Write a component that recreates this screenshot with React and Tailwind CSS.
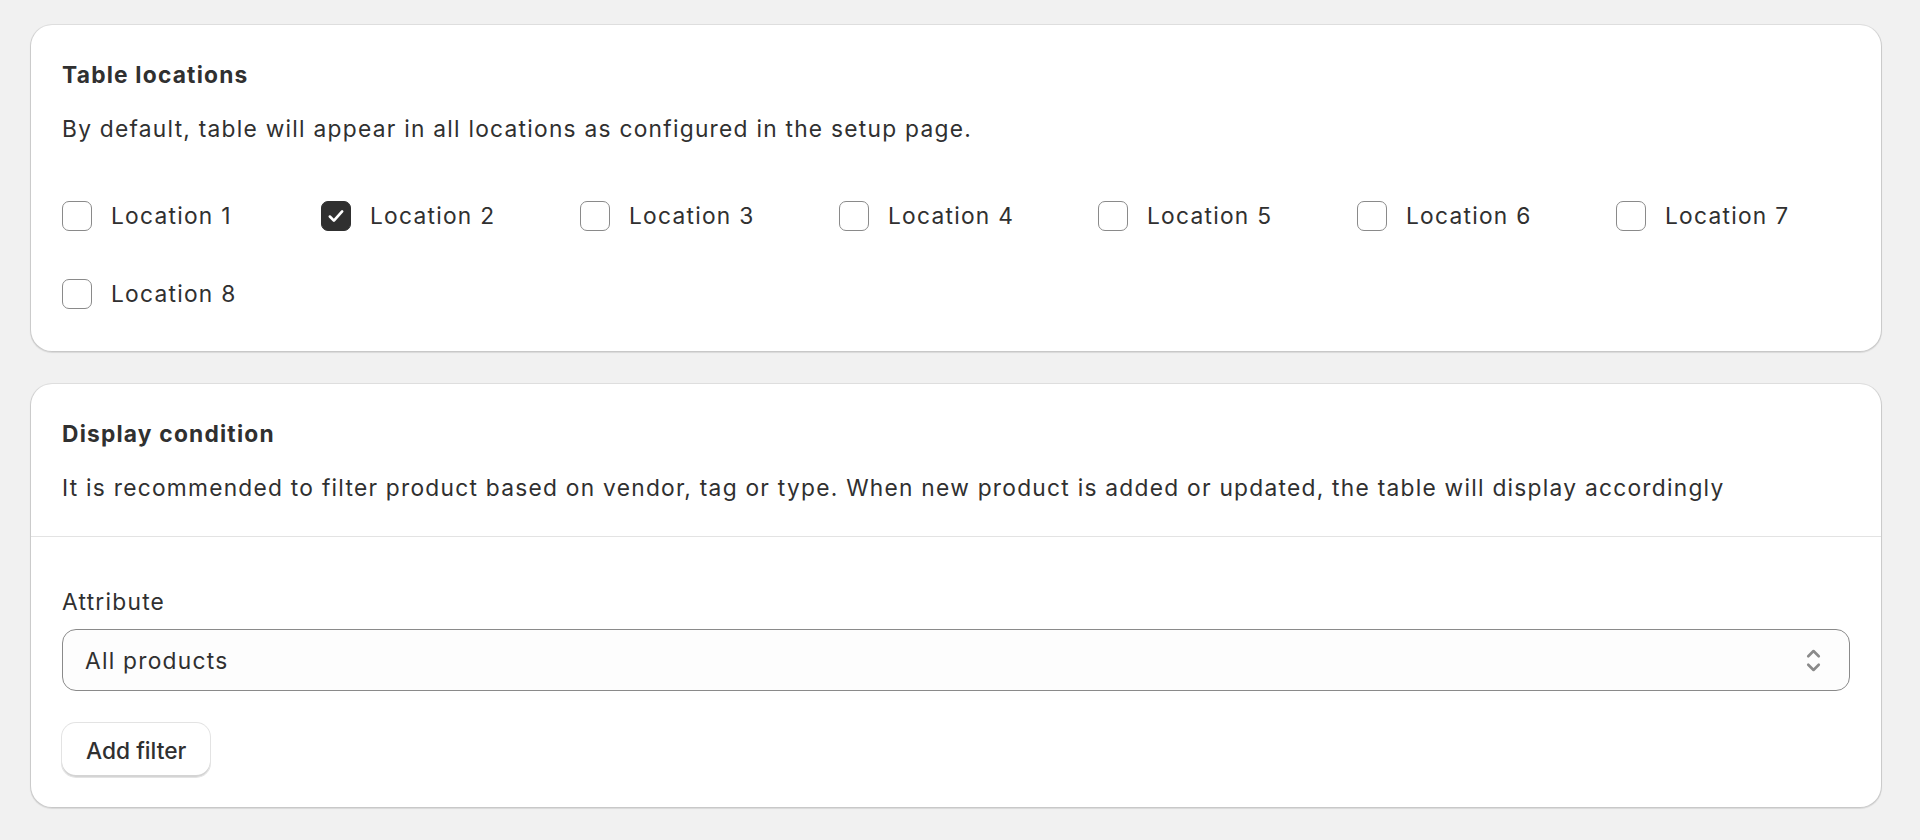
import React, { useState } from 'react';

const LOCATIONS = ['Location 1', 'Location 2', 'Location 3', 'Location 4', 'Location 5', 'Location 6', 'Location 7', 'Location 8'];

function Checkbox({ label, checked, onChange }) {
  return (
    <label className="flex items-center h-[35px] cursor-pointer select-none">
      <span
        className={
          checked
            ? 'flex items-center justify-center w-[30px] h-[30px] rounded-[7px] bg-[#303030] border border-[#303030]'
            : 'flex items-center justify-center w-[30px] h-[30px] rounded-[7px] bg-white border border-[#8a8a8a]'
        }
      >
        {checked && (
          <svg width="30" height="30" viewBox="0 0 20 20" fill="none">
            <path d="M5.6 10.4l2.9 2.9 5.9-6.6" stroke="#fff" strokeWidth="1.9" strokeLinecap="round" strokeLinejoin="round" />
          </svg>
        )}
      </span>
      <input type="checkbox" className="hidden" checked={checked} onChange={onChange} />
      <span className="ml-[19px]">{label}</span>
    </label>
  );
}

function SelectIcon() {
  return (
    <svg width="35" height="35" viewBox="0 0 20 20" fill="none">
      <path d="M7 7.6l3-3 3 3" stroke="#8a8a8a" strokeWidth="1.5" strokeLinecap="round" strokeLinejoin="round" />
      <path d="M7 12.4l3 3 3-3" stroke="#8a8a8a" strokeWidth="1.5" strokeLinecap="round" strokeLinejoin="round" />
    </svg>
  );
}

export default function App() {
  const [selected, setSelected] = useState(['Location 2']);
  const [attribute, setAttribute] = useState('All products');

  const toggle = (name) =>
    setSelected((prev) => (prev.includes(name) ? prev.filter((n) => n !== name) : [...prev, name]));

  return (
    <div className="min-h-screen bg-[#f1f1f1] pt-[25px] pl-[31px] pr-[39px] pb-[32px] text-[#303030] text-[22.75px] leading-[35px] tracking-[1.25px] font-['Inter',sans-serif] antialiased">
      <div className="flex flex-col gap-[33px]">
        {/* Table locations */}
        <section className="bg-white rounded-[21px] shadow-[0_0_0_1px_rgba(0,0,0,0.07),0_1px_1px_1px_rgba(0,0,0,0.1)] pt-[32px] px-[31px] pb-[40px]">
          <h2 className="font-[650] tracking-[1.2px]">Table locations</h2>
          <p className="mt-[19px]">By default, table will appear in all locations as configured in the setup page.</p>
          <div className="mt-[52px] grid grid-cols-7 gap-x-[25px] gap-y-[43px]">
            {LOCATIONS.map((name) => (
              <Checkbox key={name} label={name} checked={selected.includes(name)} onChange={() => toggle(name)} />
            ))}
          </div>
        </section>

        {/* Display condition */}
        <section className="bg-white rounded-[21px] shadow-[0_0_0_1px_rgba(0,0,0,0.07),0_1px_1px_1px_rgba(0,0,0,0.1)]">
          <div className="pt-[32px] px-[31px] pb-[31px]">
            <h2 className="font-[650] tracking-[1.2px]">Display condition</h2>
            <p className="mt-[19px]">
              It is recommended to filter product based on vendor, tag or type. When new product is added or updated, the table will display accordingly
            </p>
          </div>
          <div className="border-t border-[#e3e3e3] pt-[47px] px-[31px] pb-[30px]">
            <div>Attribute</div>
            <div className="mt-[10px] relative h-[62px] rounded-[14px] border border-[#8a8a8a] bg-[#fdfdfd] flex items-center pl-[22px] pr-[18px]">
              <span className="flex-1">{attribute}</span>
              <SelectIcon />
              <select
                className="absolute inset-0 opacity-0 cursor-pointer"
                value={attribute}
                onChange={(e) => setAttribute(e.target.value)}
              >
                <option>All products</option>
                <option>Vendor</option>
                <option>Tag</option>
                <option>Type</option>
              </select>
            </div>
            <button className="mt-[32px] h-[54px] px-[24px] rounded-[14px] bg-white font-[550] tracking-normal text-[#303030] shadow-[0_0_0_1px_#e3e3e3,inset_0_-2px_0_0_#d4d4d4]">
              Add filter
            </button>
          </div>
        </section>
      </div>
    </div>
  );
}
